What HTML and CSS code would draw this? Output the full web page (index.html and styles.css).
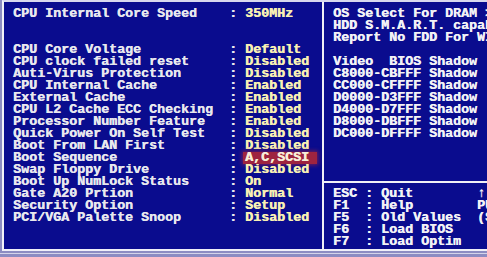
FILE: index.html
```html
<!DOCTYPE html>
<html lang="en">
<head>
    <meta charset="UTF-8">
    <title>CMOS Setup - BIOS Features</title>
    <link rel="stylesheet" href="styles.css">
</head>
<body>

<div class="screen">
    <div class="frame">
        <!-- setup items -->
        <div class="items">
            <div class="row"><span class="label">CPU Internal Core Speed</span><span class="sep">:</span><span class="value">350MHz</span></div>
            <div class="gap"></div>
            <div class="row"><span class="label">CPU Core Voltage</span><span class="sep">:</span><span class="value">Default</span></div>
            <div class="row"><span class="label">CPU clock failed reset</span><span class="sep">:</span><span class="value">Disabled</span></div>
            <div class="row"><span class="label">Auti-Virus Protection</span><span class="sep">:</span><span class="value">Disabled</span></div>
            <div class="row"><span class="label">CPU Internal Cache</span><span class="sep">:</span><span class="value">Enabled</span></div>
            <div class="row"><span class="label">External Cache</span><span class="sep">:</span><span class="value">Enabled</span></div>
            <div class="row"><span class="label">CPU L2 Cache ECC Checking</span><span class="sep">:</span><span class="value">Enabled</span></div>
            <div class="row"><span class="label">Processor Number Feature</span><span class="sep">:</span><span class="value">Enabled</span></div>
            <div class="row"><span class="label">Quick Power On Self Test</span><span class="sep">:</span><span class="value">Disabled</span></div>
            <div class="row"><span class="label">Boot From LAN First</span><span class="sep">:</span><span class="value">Disabled</span></div>
            <div class="row"><span class="label">Boot Sequence</span><span class="sep">:</span><span class="value selected">A,C,SCSI</span></div>
            <div class="row"><span class="label">Swap Floppy Drive</span><span class="sep">:</span><span class="value">Disabled</span></div>
            <div class="row"><span class="label">Boot Up NumLock Status</span><span class="sep">:</span><span class="value">On</span></div>
            <div class="row"><span class="label">Gate A20 Prtion</span><span class="sep">:</span><span class="value">Normal</span></div>
            <div class="row"><span class="label">Security Option</span><span class="sep">:</span><span class="value">Setup</span></div>
            <div class="row"><span class="label">PCI/VGA Palette Snoop</span><span class="sep">:</span><span class="value">Disabled</span></div>
        </div>

        <!-- right hand panel -->
        <div class="side">
            <div class="side-top">
                <div class="row">OS Select For DRAM &gt; 64MB</div>
                <div class="row">HDD S.M.A.R.T. capability</div>
                <div class="row">Report No FDD For WIN 95</div>
                <div class="gap-one"></div>
                <div class="row">Video  BIOS Shadow</div>
                <div class="row">C8000-CBFFF Shadow</div>
                <div class="row">CC000-CFFFF Shadow</div>
                <div class="row">D0000-D3FFF Shadow</div>
                <div class="row">D4000-D7FFF Shadow</div>
                <div class="row">D8000-DBFFF Shadow</div>
                <div class="row">DC000-DFFFF Shadow</div>
            </div>
            <div class="side-keys">
                <div class="row"><span class="key">ESC : Quit</span>↑↓→← : Select Item</div>
                <div class="row"><span class="key">F1  : Help</span>PU/PD/+/- : Modify</div>
                <div class="row"><span class="key">F5  : Old Values</span>(Shift)F2 : Color</div>
                <div class="row"><span class="key">F6  : Load BIOS</span></div>
                <div class="row"><span class="key">F7  : Load Optim</span></div>
            </div>
        </div>
    </div>
    <div class="base"></div>
</div>

</body>
</html>
```

FILE: styles.css
```css
body {
    margin: 0;
    padding: 0;
    background-color: #8c8cc2;
    font-family: "Liberation Mono", "DejaVu Sans Mono", monospace;
    font-size: 13.333px;
    font-weight: bold;
    line-height: 12px;
    color: #e8e8ee;
}

.screen {
    width: 487px;
    height: 257px;
    overflow: hidden;
}

.frame {
    display: flex;
    margin-left: 2px;
    border-left: 2px solid #f2f2f8;
    border-top: 2px solid #d8d8ee;
    border-bottom: 2px solid #f0f0f8;
    background-color: #0a0c8e;
}

.items {
    width: 304px;
    flex-shrink: 0;
    padding: 6px 0 25px 9px;
}

.row {
    height: 12px;
    white-space: pre;
    text-shadow: 0.4px 0 0 currentColor;
}

.gap {
    height: 24px;
}

.gap-one {
    height: 12px;
}

.label {
    display: inline-block;
    width: 216px;
}

.sep {
    display: inline-block;
    width: 16px;
}

.value {
    color: #f8f0b4;
}

.selected {
    display: inline-block;
    width: 72px;
    height: 12px;
    margin-left: -2px;
    padding-left: 2px;
    color: #f8eed8;
    background-color: #9e2440;
    box-shadow: 0 0 4px 1px rgba(158, 36, 64, 0.75);
}

.side {
    flex: 1;
    min-width: 0;
    margin-left: 5px;
    border-left: 2px solid #f0f0f6;
    overflow: hidden;
    color: #f2f2f6;
}

.side-top {
    height: 168px;
    padding: 6px 0 5px 9px;
    border-bottom: 2px solid #f0f0f6;
}

.side-keys {
    padding: 5px 0 0 9px;
}

.key {
    display: inline-block;
    width: 144px;
}

.base {
    margin-top: 2px;
    border-top: 1px solid #d4d4ea;
}
```
